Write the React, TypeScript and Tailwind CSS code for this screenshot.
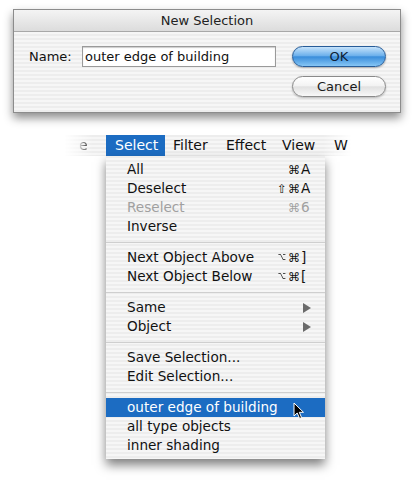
import React from "react";

const font = { fontFamily: '"DejaVu Sans", "Noto Sans", sans-serif' };

type Item =
  | { kind: "item"; label: string; mods?: string; keyChar?: string; disabled?: boolean; sub?: boolean; active?: boolean }
  | { kind: "sep" };

const items: Item[] = [
  { kind: "item", label: "All", mods: "⌘", keyChar: "A" },
  { kind: "item", label: "Deselect", mods: "⇧⌘", keyChar: "A" },
  { kind: "item", label: "Reselect", mods: "⌘", keyChar: "6", disabled: true },
  { kind: "item", label: "Inverse" },
  { kind: "sep" },
  { kind: "item", label: "Next Object Above", mods: "⌥⌘", keyChar: "]" },
  { kind: "item", label: "Next Object Below", mods: "⌥⌘", keyChar: "[" },
  { kind: "sep" },
  { kind: "item", label: "Same", sub: true },
  { kind: "item", label: "Object", sub: true },
  { kind: "sep" },
  { kind: "item", label: "Save Selection..." },
  { kind: "item", label: "Edit Selection..." },
  { kind: "sep" },
  { kind: "item", label: "outer edge of building", active: true },
  { kind: "item", label: "all type objects" },
  { kind: "item", label: "inner shading" },
];

const stripes =
  "bg-[repeating-linear-gradient(to_bottom,#ededed_0px,#ededed_2px,#f6f6f6_2px,#f6f6f6_4px)]";

function Shortcut({ mods, keyChar }: { mods: string; keyChar: string }) {
  return (
    <div className="flex shrink-0 items-center">
      <div className="w-[36px] flex justify-end">
        {Array.from(mods).map((m, i) =>
          m === "⌥" ? (
            <span key={i} className="w-[12px] flex justify-center text-[10px] leading-none">
              <span className="inline-block scale-x-[0.7]">{m}</span>
            </span>
          ) : (
            <span key={i} className="w-[12px] text-center text-[12px] leading-none">
              {m}
            </span>
          )
        )}
      </div>
      <span className="w-[11px] pl-[1px]">{keyChar}</span>
    </div>
  );
}

function Cursor() {
  return (
    <svg className="absolute left-[187px] top-[4px]" width="12" height="18" viewBox="0 0 12 18">
      <path
        d="M1 1 L1 14 L4.2 11 L6.6 16.5 L8.6 15.6 L6.3 10.3 L10.5 10.3 Z"
        fill="#000"
        stroke="#fff"
        strokeWidth="1"
        strokeLinejoin="round"
      />
    </svg>
  );
}

export default function App() {
  return (
    <div className="w-[415px] h-[484px] bg-white pt-[9px] overflow-hidden text-[13px] text-[#111]" style={font}>
      {/* dialog */}
      <div className={`ml-[13px] w-[388px] h-[104px] border border-[#8c8c8c] shadow-[0_5px_9px_rgba(0,0,0,0.45)] flex flex-col ${stripes}`}>
        <div className="h-[22px] shrink-0 flex items-center justify-center bg-[linear-gradient(to_bottom,#f4f4f4,#dcdcdc)] border-b border-[#a8a8a8] text-[#222]">
          New Selection
        </div>
        <div className="flex pl-[15px] pt-[14px]">
          <div className="flex items-center h-[21px] w-[53px]">Name:</div>
          <div className="w-[194px] h-[21px] bg-white border border-[#9a9a9a] shadow-[inset_0_1px_1px_rgba(0,0,0,0.2)] flex items-center pl-[2px]">
            outer edge of building
          </div>
          <div className="ml-[16px] flex flex-col gap-[9px]">
            <div className="w-[94px] h-[21px] rounded-full border border-[#275c98] bg-[linear-gradient(to_bottom,#c6e3fb,#6eb1ec_45%,#3a8ddb_52%,#86c6f5)] flex items-center justify-center text-[#0e1f36] shadow-[0_1px_2px_rgba(0,0,0,0.3)]">
              OK
            </div>
            <div className="w-[94px] h-[21px] rounded-full border border-[#8a8a8a] bg-[linear-gradient(to_bottom,#ffffff,#f3f3f3_45%,#e1e1e1_52%,#f8f8f8)] flex items-center justify-center text-[#1a1a1a] shadow-[0_1px_2px_rgba(0,0,0,0.25)]">
              Cancel
            </div>
          </div>
        </div>
      </div>

      {/* menu bar */}
      <div className="mt-[22px] ml-[64px] w-[288px] h-[21px] relative">
        <div className={`absolute inset-0 ${stripes} shadow-[0_3px_6px_rgba(0,0,0,0.3)] [mask-image:linear-gradient(to_right,transparent,black_10%,black_90%,transparent)]`} />
        <div className="relative flex h-full items-center text-[14px]">
          <div className="w-[42px] pl-[15px] text-[#555] [mask-image:linear-gradient(to_right,transparent_14px,black_22px)]">e</div>
          <div className="w-[59px] h-full bg-[#1c6cc2] text-white flex items-center pl-[9px]">Select</div>
          <div className="w-[53px] pl-[8px]">Filter</div>
          <div className="w-[56px] pl-[8px]">Effect</div>
          <div className="w-[52px] pl-[8px]">View</div>
          <div className="pl-[8px]">W</div>
        </div>
      </div>

      {/* dropdown */}
      <div className={`relative ml-[106px] w-[219px] py-[4px] shadow-[0_6px_10px_rgba(0,0,0,0.5)] ${stripes}`}>
        {items.map((it, i) =>
          it.kind === "sep" ? (
            <div key={i} className="h-[12px] flex items-center">
              <div className="w-full h-px bg-[#cfcfcf]" />
            </div>
          ) : (
            <div
              key={i}
              className={`relative h-[19px] flex items-center pl-[21px] pr-[14px] text-[13.6px] whitespace-nowrap ${
                it.active ? "bg-[#1c6cc2] text-white" : it.disabled ? "text-[#a0a0a0]" : ""
              }`}
            >
              <span className="flex-1">{it.label}</span>
              {it.mods && it.keyChar && <Shortcut mods={it.mods} keyChar={it.keyChar} />}
              {it.sub && (
                <svg width="8" height="10" viewBox="0 0 8 10">
                  <path d="M0 0 L8 5 L0 10 Z" fill="#6a6a6a" />
                </svg>
              )}
              {it.active && <Cursor />}
            </div>
          )
        )}
      </div>
    </div>
  );
}
